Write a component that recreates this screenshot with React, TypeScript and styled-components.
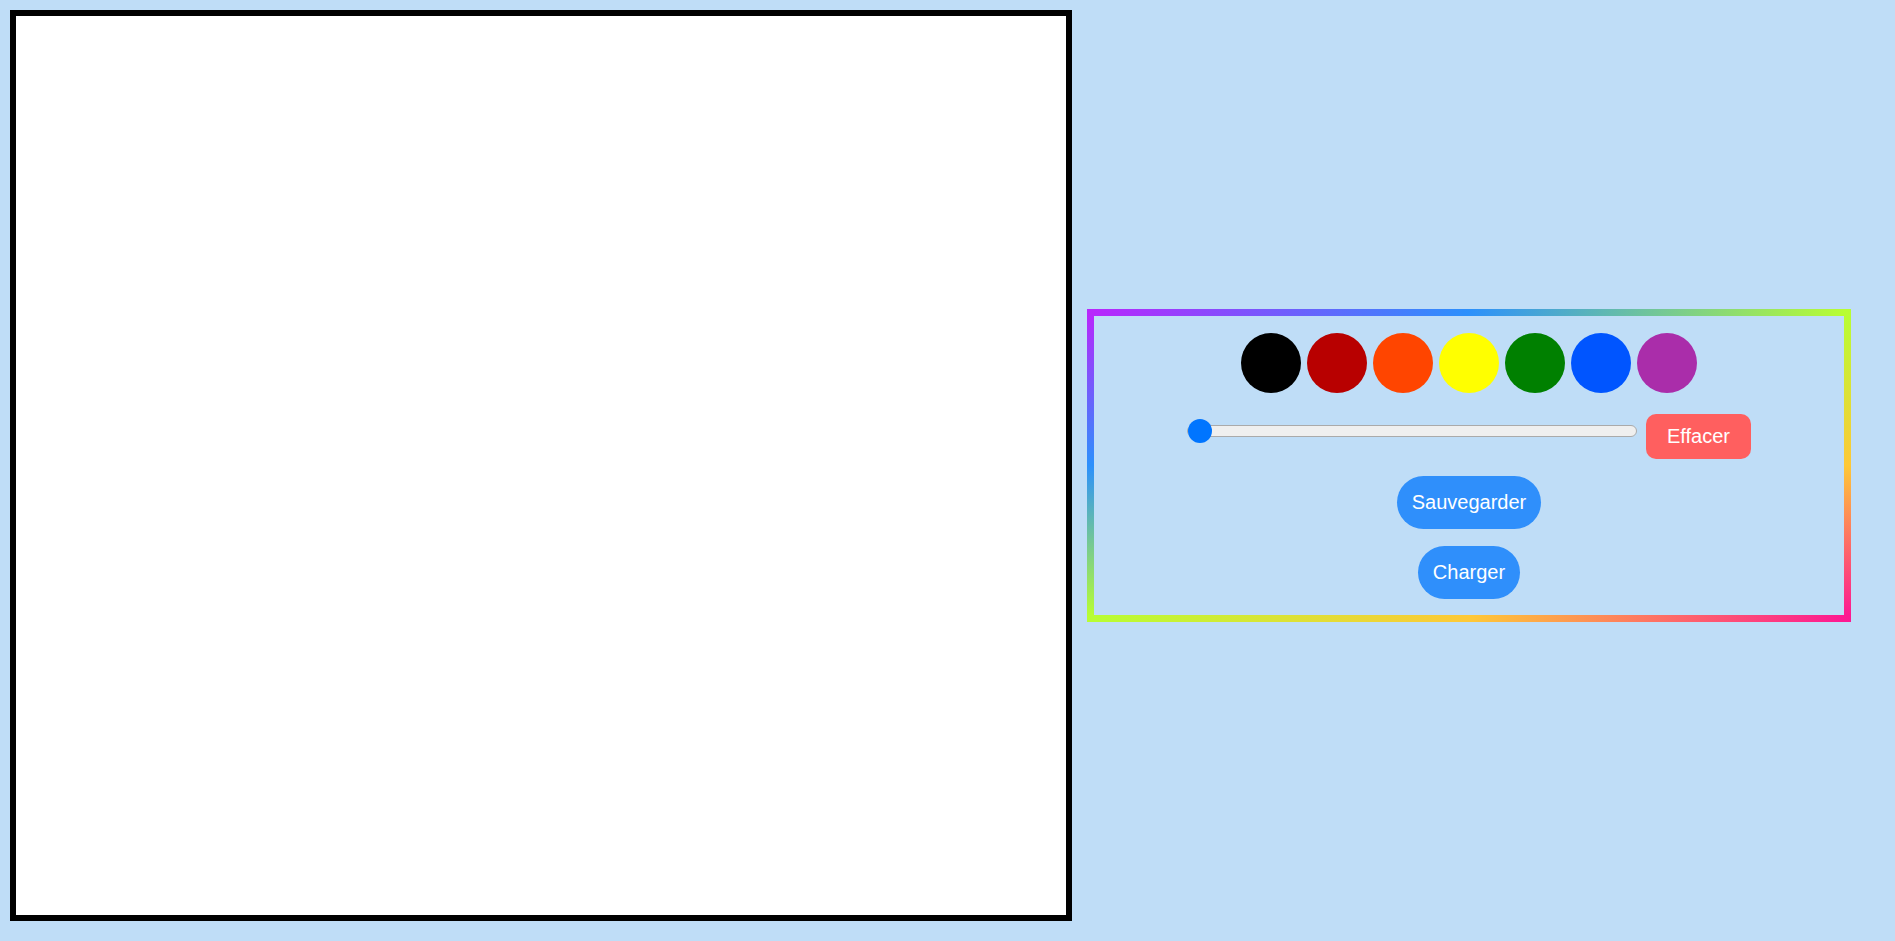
import React, { useState } from 'react'
import styled, { createGlobalStyle } from 'styled-components'

const GlobalStyle = createGlobalStyle`
    body {
        margin: 0;
        background-color: #bfddf7;
        font-family: "Liberation Sans", Arial, sans-serif;
    }
`

const Page = styled.div`
    display: flex;
    align-items: center;
    gap: 15px;
    padding: 10px;
`

const DrawingCanvas = styled.canvas`
    display: block;
    width: 1050px;
    height: 899px;
    background-color: #ffffff;
    border: 6px solid #000000;
`

const Toolbox = styled.div`
    width: 750px;
    padding: 17px 0 16px;
    display: flex;
    flex-direction: column;
    align-items: center;
    border: 7px solid;
    border-image: linear-gradient(to bottom right, #b827fc 0%, #2c90fc 25%, #b8fd33 50%, #fec837 75%, #fd1892 100%) 1;
`

const Swatches = styled.div`
    display: flex;
    gap: 6px;
    height: 60px;
    margin-bottom: 21px;
`

const Swatch = styled.div<{ $color: string }>`
    width: 60px;
    height: 60px;
    border-radius: 50%;
    background-color: ${p => p.$color};
    cursor: pointer;
`

const ToolRow = styled.div`
    display: flex;
    align-items: flex-start;
    gap: 9px;
    height: 45px;
    margin-bottom: 17px;
`

const SizeSlider = styled.input`
    -webkit-appearance: none;
    appearance: none;
    width: 450px;
    height: 24px;
    margin: 5px 0 0 0;
    background: transparent;

    &::-webkit-slider-runnable-track {
        height: 12px;
        background: #efefef;
        border: 1px solid #aaaaaa;
        border-radius: 6px;
        box-sizing: border-box;
    }

    &::-webkit-slider-thumb {
        -webkit-appearance: none;
        width: 24px;
        height: 24px;
        margin-top: -7px;
        border-radius: 50%;
        background: #0075ff;
        border: none;
    }
`

const ClearButton = styled.button`
    font-family: "Liberation Sans", Arial, sans-serif;
    font-size: 20px;
    color: #ffffff;
    background-color: #ff5f5f;
    border: none;
    border-radius: 10px;
    padding: 11px 21px;
    cursor: pointer;
`

const PillButton = styled.button<{ $last?: boolean }>`
    font-family: "Liberation Sans", Arial, sans-serif;
    font-size: 20px;
    color: #ffffff;
    background-color: #2f8ffb;
    border: none;
    border-radius: 30px;
    padding: 15px;
    margin-bottom: ${p => (p.$last ? '0' : '17px')};
    cursor: pointer;
`

const colors = ['#000000', '#b80000', '#ff4500', '#ffff00', '#008000', '#0055ff', '#aa2daa']

const App: React.FunctionComponent = () => {
    const [color, setColor] = useState('#000000')
    const [size, setSize] = useState(1)

    return (
        <>
            <GlobalStyle />
            <Page>
                <DrawingCanvas width={1050} height={899} data-color={color} />
                <Toolbox>
                    <Swatches>
                        {colors.map(c => (
                            <Swatch key={c} $color={c} onClick={() => setColor(c)} />
                        ))}
                    </Swatches>
                    <ToolRow>
                        <SizeSlider
                            type="range"
                            min={1}
                            max={50}
                            value={size}
                            onChange={e => setSize(Number(e.target.value))}
                        />
                        <ClearButton>Effacer</ClearButton>
                    </ToolRow>
                    <PillButton>Sauvegarder</PillButton>
                    <PillButton $last>Charger</PillButton>
                </Toolbox>
            </Page>
        </>
    )
}

export default App
